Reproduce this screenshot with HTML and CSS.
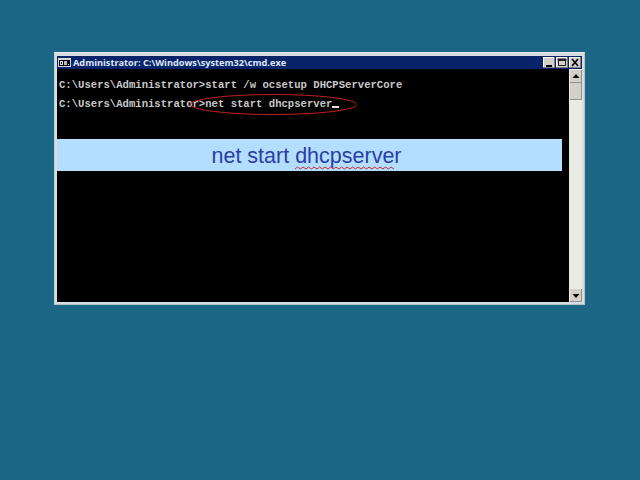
FILE: index.html
```html
<!DOCTYPE html>
<html lang="en">
<head>
<meta charset="utf-8">
<title>cmd.exe</title>
<link rel="stylesheet" href="styles.css">
</head>
<body>
<div class="window">
  <div class="titlebar">
    <svg class="appicon" width="13" height="9" viewBox="0 0 13 9"><rect width="13" height="9" fill="#d8d8d8"/><rect x="1" y="2" width="11" height="6" fill="#000"/><rect x="2" y="3" width="3" height="4" fill="#ddd"/><rect x="3" y="4" width="1" height="2" fill="#000"/><rect x="6" y="3" width="3" height="4" fill="#bbb"/><rect x="10" y="6" width="1" height="1" fill="#ddd"/></svg>
    <span class="title">Administrator: C:\Windows\system32\cmd.exe</span>
    <div class="controls">
      <span class="ctl"><svg width="12" height="11" viewBox="0 0 12 11"><rect x="3" y="8" width="6" height="2" fill="#000"/></svg></span>
      <span class="ctl"><svg width="12" height="11" viewBox="0 0 12 11"><path d="M2.500 2.500h7v6h-7z M2 2h8v1.500H2z" fill="none" stroke="#222"/></svg></span>
      <span class="ctl"><svg width="12" height="11" viewBox="0 0 12 11"><path d="M3 2l6 7M9 2l-6 7" stroke="#000" stroke-width="1.600"/></svg></span>
    </div>
  </div>
  <div class="body">
    <div class="console">
      <pre class="output">C:\Users\Administrator&gt;start /w ocsetup DHCPServerCore
C:\Users\Administrator&gt;net start dhcpserver<span class="cursor"></span></pre>
      <svg class="ellipse" width="172" height="24" viewBox="0 0 172 24"><ellipse cx="85.500" cy="12.500" rx="83" ry="10" fill="none" stroke="#c02020" stroke-width="1"/></svg>
      <div class="callout"><span>net start <span class="squiggle">dhcpserver<svg class="wave" width="106" height="4" viewBox="0 0 106 4"><path d="M0 3l2.500-2 3 2 2.500-2 3 2 2.500-2 3 2 2.500-2 3 2 2.500-2 3 2 2.500-2 3 2 2.500-2 3 2 2.500-2 3 2 2.500-2 3 2 2.500-2 3 2 2.500-2 3 2 2.500-2 3 2 2.500-2 3 2 2.500-2 3 2 2.500-2 3 2 2.500-2 3 2 2.500-2 3 2 2.500-2 3 2" fill="none" stroke="#c8282c"/></svg></span></span></div>
    </div>
    <div class="scrollbar">
      <span class="arrow"><svg width="12" height="13" viewBox="0 0 12 13"><path d="M6 4l3.500 4h-7z" fill="#000"/></svg></span>
      <span class="thumb"></span>
      <span class="track"></span>
      <span class="arrow"><svg width="12" height="13" viewBox="0 0 12 13"><path d="M6 9l3.500-4h-7z" fill="#000"/></svg></span>
    </div>
  </div>
</div>
</body>
</html>
```

FILE: styles.css
```css
html, body {
  margin: 0;
  padding: 0;
  height: 100%;
}
body {
  background: #1b6685;
  overflow: hidden;
}
.window {
  width: 531px;
  height: 253px;
  margin: 52px 0 0 54px;
  box-sizing: border-box;
  padding: 3px 2px 2px;
  background: #d6dee2;
  border: 1px solid #b9c4c9;
  border-top-color: #e6ecee;
  border-left-color: #c8d0d4;
  display: flex;
  flex-direction: column;
}
.titlebar {
  height: 13px;
  flex: none;
  background: #0a246a;
  display: flex;
  align-items: center;
  padding-left: 1px;
  gap: 2px;
}
.appicon { flex: none; }
.title {
  font: bold 9.200px/13px "Open Sans", "Liberation Sans", sans-serif;
  color: #dfe9f8;
  white-space: nowrap;
}
.controls {
  margin-left: auto;
  display: flex;
  gap: 1px;
  padding-right: 1px;
}
.ctl {
  width: 12px;
  height: 11px;
  background: #d4d0c8;
  box-shadow: inset -1px -1px 0 #808080, inset 1px 1px 0 #fff;
  display: block;
}
.ctl svg { display: block; }
.body {
  flex: 1;
  display: flex;
  min-height: 0;
}
.console {
  position: relative;
  flex: 1;
  background: #000;
  padding: 7px 0 0 2px;
}
.output {
  margin: 0;
  font: bold 10.600px/18.500px "Liberation Mono", monospace;
  color: #c8c8c8;
}
.cursor {
  display: inline-block;
  width: 7px;
  height: 2px;
  background: #e0e0e0;
  margin-bottom: -1px;
}
.ellipse {
  position: absolute;
  left: 131px;
  top: 23px;
}
.callout {
  position: absolute;
  left: 0;
  top: 70px;
  width: 505px;
  height: 32px;
  box-sizing: border-box;
  padding: 2px 6px 0 0;
  background: #b4deff;
  display: flex;
  align-items: center;
  justify-content: center;
  font: 21.500px/30px "Liberation Sans", sans-serif;
  color: #2a3ea4;
}
.squiggle {
  position: relative;
  display: inline-block;
}
.wave {
  position: absolute;
  left: 0;
  bottom: 1px;
}
.scrollbar {
  width: 13px;
  flex: none;
  background: #ebebe6;
  display: flex;
  flex-direction: column;
  padding: 1px 0 0 1px;
  box-sizing: border-box;
}
.arrow {
  display: block;
  height: 13px;
  background: #d4d0c8;
  box-shadow: inset -1px -1px 0 #909090;
}
.arrow svg { display: block; }
.thumb {
  display: block;
  height: 17px;
  background: #d4d0c8;
  box-shadow: inset -1px -1px 0 #909090;
}
.track { display: block; flex: 1; }
```
